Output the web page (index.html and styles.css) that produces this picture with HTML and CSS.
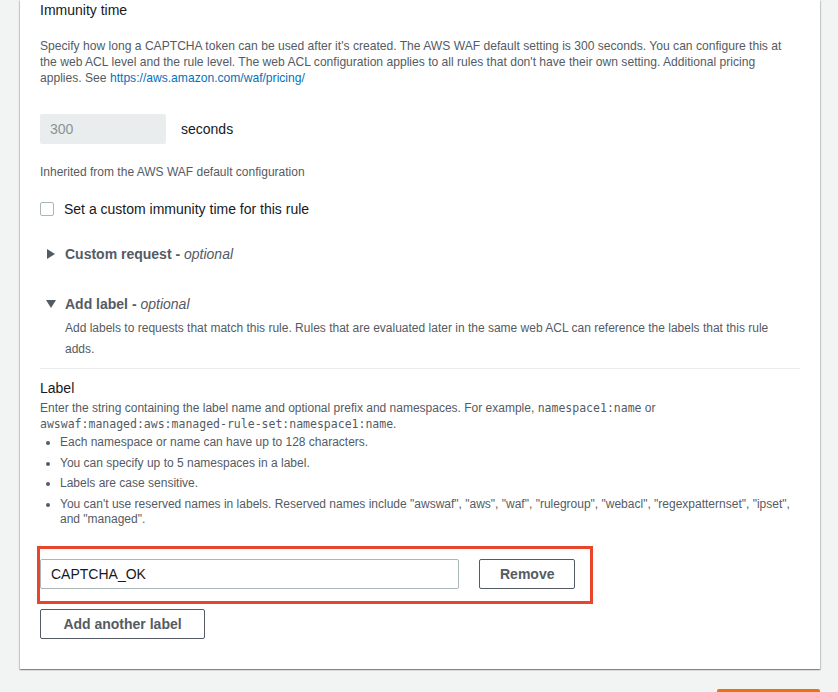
FILE: index.html
```html
<!DOCTYPE html>
<html lang="en">
<head>
    <meta charset="UTF-8">
    <meta name="viewport" content="width=device-width, initial-scale=1.0">
    <title>Add label - Rule</title>
    <link rel="stylesheet" href="styles.css">
</head>
<body>
    <div class="page">
        <div class="card">
            <h3 class="field-title">Immunity time</h3>
            <p class="desc first-desc">Specify how long a CAPTCHA token can be used after it's created. The AWS WAF default setting is 300 seconds. You can configure this at the web ACL level and the rule level. The web ACL configuration applies to all rules that don't have their own setting. Additional pricing applies. See <a href="#">https://aws.amazon.com/waf/pricing/</a></p>

            <div class="seconds-row">
                <input class="seconds-input" type="text" value="300" disabled>
                <span class="seconds-unit">seconds</span>
            </div>

            <p class="desc inherited">Inherited from the AWS WAF default configuration</p>

            <label class="check-row">
                <span class="checkbox"></span>
                <span>Set a custom immunity time for this rule</span>
            </label>

            <div class="expander collapsed">
                <svg class="caret" width="9" height="10" viewBox="0 0 9 10"><path d="M0 0 L8 5 L0 10 Z" fill="#545b64"/></svg>
                <span class="exp-title">Custom request - <em>optional</em></span>
            </div>

            <div class="expander opened">
                <svg class="caret" width="10" height="8" viewBox="0 0 10 8"><path d="M0 0 L10 0 L5 8 Z" fill="#545b64"/></svg>
                <span class="exp-title">Add label - <em>optional</em></span>
            </div>
            <p class="desc exp-desc">Add labels to requests that match this rule. Rules that are evaluated later in the same web ACL can reference the labels that this rule adds.</p>

            <hr class="divider">

            <h3 class="field-title label-title">Label</h3>
            <p class="desc label-desc">Enter the string containing the label name and optional prefix and namespaces. For example, <code>namespace1:name</code> or <code>awswaf:managed:aws:managed-rule-set:namespace1:name</code>.</p>
            <ul class="rules">
                <li>Each namespace or name can have up to 128 characters.</li>
                <li>You can specify up to 5 namespaces in a label.</li>
                <li>Labels are case sensitive.</li>
                <li>You can't use reserved names in labels. Reserved names include "awswaf", "aws", "waf", "rulegroup", "webacl", "regexpatternset", "ipset", and "managed".</li>
            </ul>

            <div class="label-row">
                <input class="label-input" type="text" value="CAPTCHA_OK">
                <button class="btn">Remove</button>
                <div class="highlight"></div>
            </div>

            <button class="btn add-btn">Add another label</button>
        </div>

        <div class="footer">
            <button class="primary"></button>
        </div>
    </div>
</body>
</html>
```

FILE: styles.css
```css
body {
    margin: 0;
    background-color: #f2f3f3;
    font-family: "Liberation Sans", Arial, sans-serif;
    color: #16191f;
    overflow: hidden;
}
.page {
    padding: 0 18px 0 20px;
}
.card {
    background: #fff;
    padding: 0 20px 30px;
    box-shadow: 0 1px 1px 0 rgba(0, 28, 36, 0.3), 1px 1px 1px 0 rgba(0, 28, 36, 0.15), -1px 1px 1px 0 rgba(0, 28, 36, 0.15);
}
.field-title {
    margin: 0;
    font-size: 14px;
    font-weight: normal;
    line-height: 20px;
}
.desc {
    margin: 0;
    font-size: 12px;
    line-height: 16px;
    color: #545b64;
}
.desc a {
    color: #0073bb;
    text-decoration: none;
}
.first-desc {
    margin-top: 18px;
    font-size: 12.1px;
}
.seconds-row {
    display: flex;
    align-items: center;
    gap: 15px;
    margin-top: 28px;
}
.seconds-input {
    width: 126px;
    height: 30px;
    box-sizing: border-box;
    border: none;
    border-radius: 2px;
    background: #eaeded;
    padding: 0 10px;
    font-family: inherit;
    font-size: 14px;
    color: #879596;
}
.seconds-unit {
    font-size: 14px;
}
.inherited {
    margin-top: 20px;
}
.check-row {
    display: flex;
    align-items: center;
    gap: 10px;
    margin-top: 18px;
    font-size: 14px;
    line-height: 22px;
}
.checkbox {
    width: 14px;
    height: 14px;
    box-sizing: border-box;
    border: 1px solid #aab7b8;
    border-radius: 2px;
}
.expander {
    display: flex;
    align-items: center;
    padding-left: 7px;
    font-size: 14px;
    line-height: 22px;
    color: #545b64;
}
.expander.collapsed {
    margin-top: 23px;
    gap: 9px;
}
.expander.opened {
    margin-top: 28px;
    padding-left: 6px;
    gap: 9px;
}
.exp-title {
    font-weight: bold;
}
.exp-title em {
    font-weight: normal;
}
.exp-desc {
    margin-top: 3px;
    padding-left: 25px;
    line-height: 21px;
}
.divider {
    margin: 8px 0 0;
    border: none;
    border-top: 1px solid #eaeded;
}
.label-title {
    margin-top: 9px;
}
.label-desc {
    margin-top: 2px;
}
.label-desc code {
    font-family: "DejaVu Sans Mono", monospace;
    font-size: 11.5px;
}
.rules {
    margin: 3px 0 0;
    padding-left: 20px;
    font-size: 12px;
    line-height: 15px;
    color: #545b64;
}
.rules li {
    margin-bottom: 5.5px;
}
.label-row {
    position: relative;
    display: flex;
    gap: 20px;
    margin-top: 32px;
}
.label-input {
    width: 419px;
    height: 30px;
    box-sizing: border-box;
    border: 1px solid #aab7b8;
    border-radius: 2px;
    padding: 0 10px;
    font-family: inherit;
    font-size: 14px;
    color: #16191f;
}
.btn {
    height: 30px;
    padding: 0 20px;
    background: #fff;
    border: 1px solid #545b64;
    border-radius: 2px;
    font-family: inherit;
    font-size: 14px;
    font-weight: bold;
    color: #545b64;
}
.label-row .btn {
    width: 96px;
}
.add-btn {
    display: block;
    width: 165px;
    margin-top: 20px;
}
.highlight {
    position: absolute;
    left: -3px;
    top: -13px;
    width: 556px;
    height: 58px;
    box-sizing: border-box;
    border: 3px solid #e9452c;
}
.footer {
    display: flex;
    justify-content: flex-end;
    padding-top: 20px;
}
.primary {
    width: 103px;
    height: 32px;
    border: none;
    border-radius: 2px;
    background: #ec7211;
}
```
